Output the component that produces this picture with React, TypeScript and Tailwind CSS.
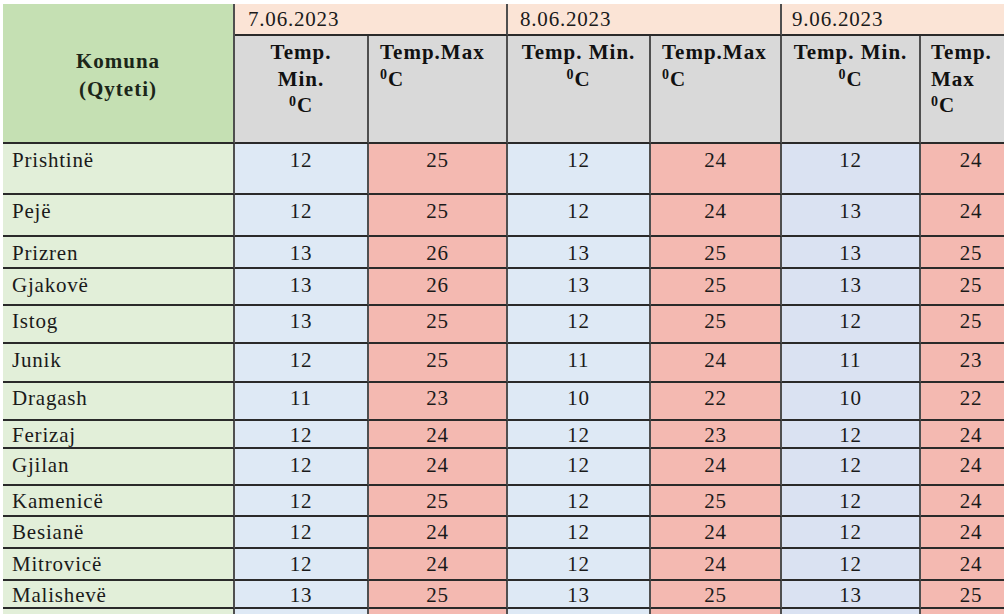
import React from 'react'

// Temperature table (7–9 June 2023) rendered like the Word table in the reference.

const COLS = 'grid grid-cols-[232px_134px_139px_143px_131px_139px_102px]'
const CELL = 'border-r-2 border-b-2 border-r-[#4f4f4f] border-b-[#2a2a2a]'

type Row = { city: string; h: string; pt: string; v: number[] }

const ROWS: Row[] = [
  { city: 'Prishtinë', h: 'h-[51px]', pt: 'pt-[4px]', v: [12, 25, 12, 24, 12, 24] },
  { city: 'Pejë', h: 'h-[42px]', pt: 'pt-[4px]', v: [12, 25, 12, 24, 13, 24] },
  { city: 'Prizren', h: 'h-[32px]', pt: 'pt-[4px]', v: [13, 26, 13, 25, 13, 25] },
  { city: 'Gjakovë', h: 'h-[37px]', pt: 'pt-[4px]', v: [13, 26, 13, 25, 13, 25] },
  { city: 'Istog', h: 'h-[38px]', pt: 'pt-[3px]', v: [13, 25, 12, 25, 12, 25] },
  { city: 'Junik', h: 'h-[39px]', pt: 'pt-[4px]', v: [12, 25, 11, 24, 11, 23] },
  { city: 'Dragash', h: 'h-[38px]', pt: 'pt-[3px]', v: [11, 23, 10, 22, 10, 22] },
  { city: 'Ferizaj', h: 'h-[28px]', pt: 'pt-[2px]', v: [12, 24, 12, 23, 12, 24] },
  { city: 'Gjilan', h: 'h-[37px]', pt: 'pt-[4px]', v: [12, 24, 12, 24, 12, 24] },
  { city: 'Kamenicë', h: 'h-[31px]', pt: 'pt-[3px]', v: [12, 25, 12, 25, 12, 24] },
  { city: 'Besianë', h: 'h-[32px]', pt: 'pt-[3px]', v: [12, 24, 12, 24, 12, 24] },
  { city: 'Mitrovicë', h: 'h-[32px]', pt: 'pt-[3px]', v: [12, 24, 12, 24, 12, 24] },
  { city: 'Malishevë', h: 'h-[28px]', pt: 'pt-[2px]', v: [13, 25, 13, 25, 13, 25] },
]

// background per value column: min / max pairs, last min is a touch more lavender
const VAL_BG = [
  'bg-[#dee9f5]',
  'bg-[#f4b9b1]',
  'bg-[#dee9f5]',
  'bg-[#f4b9b1]',
  'bg-[#dae2f2]',
  'bg-[#f4b9b1]',
]

function Deg() {
  return (
    <>
      <sup className="text-[14px] -top-[0.45em]">0</sup>C
    </>
  )
}

function Header() {
  const hd = `${CELL} bg-[#d9d9d9] pt-[3px] leading-[26.5px] font-bold tracking-[1px] text-[#111]`
  const date = `${CELL} col-span-2 bg-[#fbe4d6] flex items-center tracking-[0.8px]`
  return (
    <div className={`${COLS} grid-rows-[32px_108px]`}>
      <div className={`${CELL} row-span-2 bg-[#c5e0b3] pt-[5px] flex items-center justify-center text-center font-bold leading-[27.5px] tracking-[1px] text-[#1b2619]`}>
        <div>
          Komuna
          <br />
          (Qyteti)
        </div>
      </div>
      <div className={`${date} pl-[13px]`}>7.06.2023</div>
      <div className={`${date} pl-[12px]`}>8.06.2023</div>
      <div className={`${date} pl-[10px]`}>9.06.2023</div>

      <div className={`${hd} text-center`}>
        Temp.
        <br />
        Min.
        <br />
        <Deg />
      </div>
      <div className={`${hd} pl-[11px]`}>
        Temp.Max
        <br />
        <Deg />
      </div>
      <div className={`${hd} text-center`}>
        Temp. Min.
        <br />
        <Deg />
      </div>
      <div className={`${hd} pl-[11px]`}>
        Temp.Max
        <br />
        <Deg />
      </div>
      <div className={`${hd} text-center`}>
        Temp. Min.
        <br />
        <Deg />
      </div>
      <div className={`${hd} pl-[10px]`}>
        Temp.
        <br />
        Max
        <br />
        <Deg />
      </div>
    </div>
  )
}

function DataRow({ row }: { row: Row }) {
  return (
    <div className={`${COLS} grid-rows-[minmax(0,1fr)] ${row.h}`}>
      <div className={`${CELL} ${row.pt} bg-[#e2efd9] pl-[9px] overflow-hidden`}>{row.city}</div>
      {row.v.map((n, i) => (
        <div key={i} className={`${CELL} ${row.pt} ${VAL_BG[i]} text-center overflow-hidden`}>
          {n}
        </div>
      ))}
    </div>
  )
}

export default function App() {
  return (
    <div className="w-[1004px] h-[614px] overflow-hidden bg-white pl-[3px] pt-[4px]">
      <div className="w-[1023px] font-['Liberation_Serif',serif] text-[21px] leading-[24px] tracking-[0.8px] text-[#1a1a1a]">
        <Header />
        {ROWS.map((r) => (
          <DataRow key={r.city} row={r} />
        ))}
        <div className={`${COLS} h-[40px]`}>
          <div className={`${CELL} bg-[#e2efd9]`} />
          {VAL_BG.map((bg, i) => (
            <div key={i} className={`${CELL} ${bg}`} />
          ))}
        </div>
      </div>
    </div>
  )
}
